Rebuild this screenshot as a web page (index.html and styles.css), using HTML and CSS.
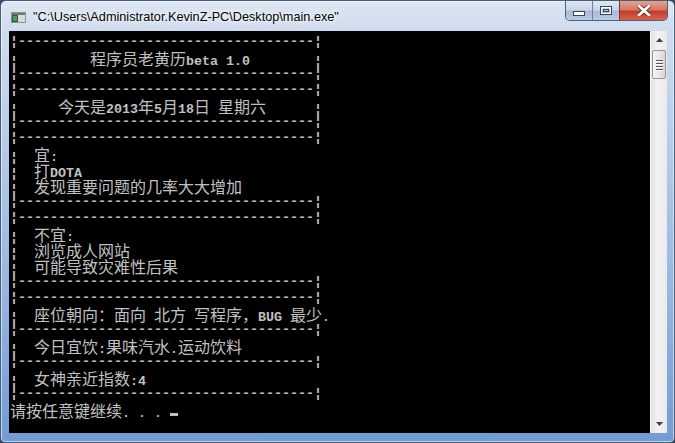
FILE: index.html
```html
<!DOCTYPE html>
<html lang="zh-CN">
<head>
    <meta charset="UTF-8">
    <meta name="viewport" content="width=device-width, initial-scale=1.0">
    <title>main.exe</title>
    <link rel="stylesheet" href="styles.css">
</head>
<body>
    <div class="window">
        <div class="titlebar">
            <svg class="app-icon" width="15" height="11" viewBox="0 0 15 11">
                <rect x="0.5" y="0.5" width="14" height="10" fill="#d8dcd8" stroke="#8c948c"/>
                <rect x="1" y="1" width="13" height="2" fill="#6f7a72"/>
                <rect x="1" y="3" width="6" height="7" fill="#2f5a3a"/>
                <rect x="2" y="4" width="4" height="5" fill="#4f9a5c"/>
            </svg>
            <span class="title">"C:\Users\Administrator.KevinZ-PC\Desktop\main.exe"</span>
            <div class="caption-buttons">
                <div class="cap-btn min">
                    <svg width="12" height="5" viewBox="0 0 12 5"><rect x="0.5" y="0.5" width="11" height="4" fill="#fff" stroke="#38465a"/></svg>
                </div>
                <div class="cap-btn max">
                    <svg width="12" height="9" viewBox="0 0 12 9"><rect x="0.5" y="0.5" width="11" height="8" fill="none" stroke="#38465a"/><rect x="1.5" y="1.5" width="9" height="6" fill="none" stroke="#fff" stroke-width="1"/><rect x="3.5" y="3.5" width="5" height="2" fill="none" stroke="#38465a"/></svg>
                </div>
                <div class="cap-btn close">
                    <svg width="14" height="11" viewBox="0 0 14 11"><path d="M2 1 L12 10 M12 1 L2 10" stroke="#6b2a24" stroke-width="4.4" stroke-linecap="square"/><path d="M2 1 L12 10 M12 1 L2 10" stroke="#fff" stroke-width="2.8" stroke-linecap="square"/></svg>
                </div>
            </div>
        </div>

        <div class="client">
            <div class="console">
<div class="line">¦-------------------------------------¦</div>
<div class="line">¦         <span class="zh">程序员老黄历</span>beta 1.0        ¦</div>
<div class="line">¦-------------------------------------¦</div>
<div class="line">¦-------------------------------------¦</div>
<div class="line">¦     <span class="zh">今天是</span>2013<span class="zh">年</span>5<span class="zh">月</span>18<span class="zh">日</span> <span class="zh">星期六</span>      ¦</div>
<div class="line">¦-------------------------------------¦</div>
<div class="line">¦-------------------------------------¦</div>
<div class="line">¦  <span class="zh">宜</span>:</div>
<div class="line">¦  <span class="zh">打</span>DOTA</div>
<div class="line">¦  <span class="zh">发现重要问题的几率大大增加</span></div>
<div class="line">¦-------------------------------------¦</div>
<div class="line">¦-------------------------------------¦</div>
<div class="line">¦  <span class="zh">不宜</span>:</div>
<div class="line">¦  <span class="zh">浏览成人网站</span></div>
<div class="line">¦  <span class="zh">可能导致灾难性后果</span></div>
<div class="line">¦-------------------------------------¦</div>
<div class="line">¦-------------------------------------¦</div>
<div class="line">¦  <span class="zh">座位朝向：面向</span> <span class="zh">北方</span> <span class="zh">写程序，</span>BUG <span class="zh">最少</span>.</div>
<div class="line">¦-------------------------------------¦</div>
<div class="line">¦  <span class="zh">今日宜饮</span>:<span class="zh">果味汽水</span>.<span class="zh">运动饮料</span></div>
<div class="line">¦-------------------------------------¦</div>
<div class="line">¦  <span class="zh">女神亲近指数</span>:4</div>
<div class="line">¦-------------------------------------¦</div>
<div class="line"><span class="zh">请按任意键继续</span>. . . <span class="cursor"></span></div>
            </div>

            <div class="scrollbar">
                <div class="scroll-arrow">
                    <svg width="7" height="4" viewBox="0 0 7 4"><path d="M0 4 L3.5 0 L7 4 Z" fill="#404040"/></svg>
                </div>
                <div class="scroll-thumb">
                    <span></span><span></span><span></span><span></span>
                </div>
                <div class="scroll-track"></div>
                <div class="scroll-arrow">
                    <svg width="7" height="4" viewBox="0 0 7 4"><path d="M0 0 L7 0 L3.5 4 Z" fill="#404040"/></svg>
                </div>
            </div>
        </div>
    </div>
</body>
</html>
```

FILE: styles.css
```css
html, body {
    margin: 0;
    padding: 0;
}
body {
    width: 675px;
    height: 443px;
    background: #3c4858;
    overflow: hidden;
}
.window {
    box-sizing: border-box;
    width: 675px;
    height: 443px;
    display: flex;
    flex-direction: column;
    border: 1px solid #4a5d78;
    border-radius: 6px 6px 5px 5px;
    background: linear-gradient(to bottom, #dde7f3 0, #cfdcee 30px, #b9cde8 130px, #94b4df 300px, #719bd6 443px);
    box-shadow: inset 0 0 0 1px rgba(255,255,255,0.55);
}
.titlebar {
    height: 30px;
    display: flex;
    align-items: flex-start;
}
.app-icon {
    margin: 11px 0 0 10px;
}
.title {
    margin: 9px 0 0 7px;
    font-family: "Liberation Sans", Arial, sans-serif;
    font-size: 12.7px;
    line-height: 14px;
    color: #000;
    text-shadow: 0 0 6px #fff, 0 0 3px #fff;
    white-space: nowrap;
}
.caption-buttons {
    margin-left: auto;
    margin-right: 6px;
    display: flex;
    height: 19px;
    border: 1px solid #4d5f7a;
    border-top: none;
    border-radius: 0 0 5px 5px;
    overflow: hidden;
}
.cap-btn {
    height: 19px;
    display: flex;
    align-items: center;
    justify-content: center;
    box-sizing: border-box;
}
.cap-btn.min {
    width: 27px;
    background: linear-gradient(to bottom, #dfe7f2 0, #c9d6e8 45%, #a8bcd8 55%, #b9cbe4 100%);
    border-right: 1px solid #6f82a0;
}
.cap-btn.min svg {
    margin-top: 6px;
}
.cap-btn.max {
    width: 27px;
    background: linear-gradient(to bottom, #dfe7f2 0, #c9d6e8 45%, #a8bcd8 55%, #b9cbe4 100%);
    border-right: 1px solid #6f3a34;
}
.cap-btn.close {
    width: 47px;
    background: linear-gradient(to bottom, #e3a393 0, #d77868 45%, #c23e2c 55%, #d8644c 100%);
}
.client {
    flex: 1;
    display: flex;
    padding: 0 7px 9px 8px;
}
.console {
    flex: 1;
    background: #000;
    padding: 3px 0 0 1px;
    color: #c0c0c0;
    font-family: "Liberation Mono", "Courier New", monospace;
    font-size: 13.333px;
    font-weight: bold;
    overflow: hidden;
}
.line {
    height: 16px;
    line-height: 16px;
    white-space: pre;
}
.zh {
    font-family: "Noto Sans CJK SC", "Noto Sans", sans-serif;
    font-size: 16px;
    font-weight: normal;
    line-height: 16px;
}
.cursor {
    display: inline-block;
    width: 8px;
    height: 16px;
    vertical-align: top;
    background: linear-gradient(to bottom, transparent 11px, #c0c0c0 11px, #c0c0c0 14px, transparent 14px);
}
.scrollbar {
    width: 16px;
    display: flex;
    flex-direction: column;
    background: linear-gradient(to right, #e4e4e4, #f2f2f2 40%, #eaeaea);
    border-left: 1px solid #f8f8f8;
}
.scroll-arrow {
    height: 18px;
    display: flex;
    align-items: center;
    justify-content: center;
}
.scroll-thumb {
    height: 29px;
    margin: 1px 1px 0 1px;
    border: 1px solid #979797;
    border-radius: 2px;
    box-sizing: border-box;
    background: linear-gradient(to right, #f4f4f4, #e8e8e8 50%, #d6d6d6);
    display: flex;
    flex-direction: column;
    align-items: center;
    justify-content: center;
    gap: 2px;
}
.scroll-thumb span {
    width: 7px;
    height: 1px;
    background: #555;
    box-shadow: 0 1px 0 #fff;
}
.scroll-track {
    flex: 1;
}
```
